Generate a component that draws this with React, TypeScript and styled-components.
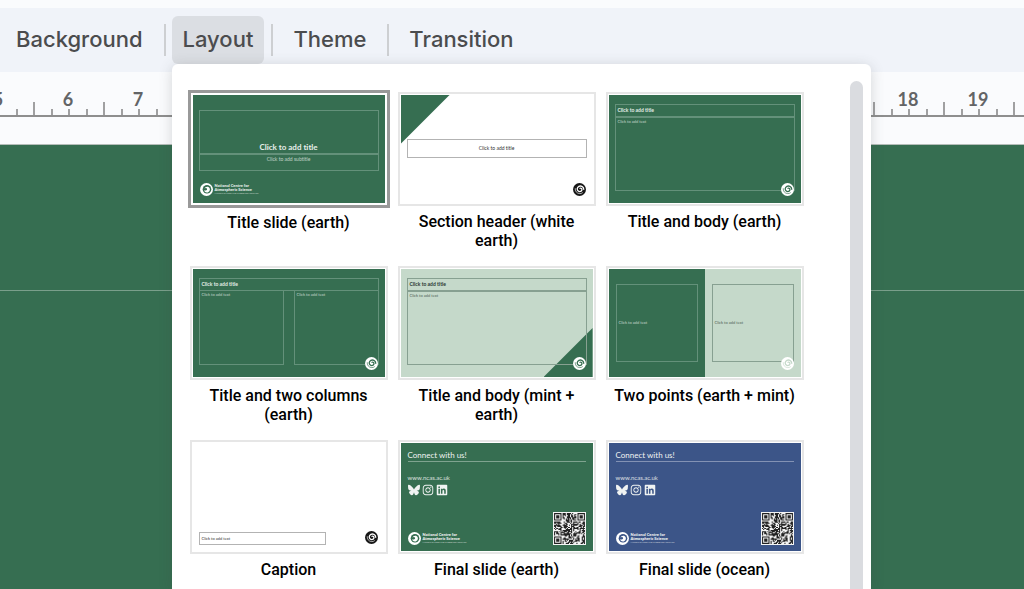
import React from "react";
import styled, { createGlobalStyle, css } from "styled-components";
import { FaBluesky, FaInstagram, FaLinkedin } from "react-icons/fa6";

const EARTH = "#366e51";
const MINT = "#c5d9ca";
const OCEAN = "#3c5588";

const GlobalStyle = createGlobalStyle`
  *, *::before, *::after { box-sizing: border-box; }
  body {
    margin: 0;
    background: #fafbfd;
    font-family: Roboto, "Liberation Sans", sans-serif;
    overflow: hidden;
  }
  button { font: inherit; color: inherit; border: 0; padding: 0; background: none; cursor: pointer; }
`;

const Page = styled.div`
  display: flex;
  flex-direction: column;
  min-height: 100vh;
  padding-top: 8px;
`;

const Toolbar = styled.nav`
  display: flex;
  align-items: center;
  height: 64px;
  padding-left: 2px;
  background: #f0f3f9;
`;

const Divider = styled.span`
  width: 2px;
  height: 32px;
  margin: 0 6px 0 7px;
  background: #cdcfd2;
`;

const ToolButton = styled.button<{ $active?: boolean }>`
  display: block;
  height: 48px;
  padding: 0 ${(p) => (p.$active ? 11 : 14)}px 2px;
  border-radius: 6px;
  font-family: Inter, Roboto, sans-serif;
  font-size: 22px;
  font-weight: 500;
  line-height: 46px;
  color: #4b4c4e;
  background: ${(p) => (p.$active ? "#dbdee3" : "transparent")};
`;

const MenuAnchor = styled.div`
  position: relative;
`;

const Menu = styled.div`
  position: absolute;
  z-index: 2;
  top: 48px;
  left: 0;
  display: flex;
  justify-content: space-between;
  width: 699px;
  height: calc(100vh - 64px);
  padding: 0 8px 0 18px;
  overflow: hidden;
  border-radius: 6px 6px 0 0;
  background: #fff;
  box-shadow: 0 2px 14px rgba(60, 64, 67, 0.2);
`;

const LayoutGrid = styled.div`
  display: grid;
  grid-template-columns: repeat(3, 198px);
  align-content: start;
  align-items: start;
  gap: 16px 10px;
  padding-top: 28px;
`;

const ScrollThumb = styled.div`
  width: 13px;
  margin-top: 17px;
  border-radius: 7px 7px 0 0;
  background: #dadce0;
`;

const LayoutOption = styled.button`
  display: flex;
  flex-direction: column;
  align-items: center;
  gap: 6px;
`;

const Frame = styled.span<{ $selected?: boolean }>`
  display: block;
  border: 2px solid #e6e6e6;
  padding: 1px;
  background: #fff;
  ${(p) =>
    p.$selected &&
    css`
      margin: -2px -2px -1px;
      border: 3px solid #999;
      padding: 2px;
    `}
`;

const OptionName = styled.span`
  font-size: 16px;
  font-weight: 500;
  line-height: 19px;
  text-align: center;
  color: #000;
`;

const Slide = styled.span<{ $bg: string; $ink: string; $line: string; $pad: string }>`
  position: relative;
  display: flex;
  flex-direction: column;
  width: 192px;
  height: 108px;
  padding: ${(p) => p.$pad};
  overflow: hidden;
  text-align: left;
  font-family: Lato, "Noto Sans", sans-serif;
  font-variant-ligatures: none;
  background: ${(p) => p.$bg};
  color: ${(p) => p.$ink};
  --line: ${(p) => p.$line};
`;

const Holder = styled.span<{
  $h: number;
  $w?: number;
  $size: number;
  $bold?: boolean;
  $center?: boolean;
  $valign?: "flex-start" | "center" | "flex-end";
}>`
  position: relative;
  display: flex;
  flex: ${(p) => (p.$w ? "none" : "1 1 auto")};
  align-items: ${(p) => p.$valign ?? "center"};
  justify-content: ${(p) => (p.$center ? "center" : "flex-start")};
  max-height: ${(p) => p.$h}px;
  min-height: ${(p) => p.$h}px;
  width: ${(p) => (p.$w ? `${p.$w}px` : "auto")};
  padding: 1px 2px;
  border: 1px solid var(--line);
  font-size: ${(p) => p.$size}px;
  font-weight: ${(p) => (p.$bold ? 700 : 400)};
  line-height: ${(p) => p.$size + 2}px;
  white-space: nowrap;
  & + &:not([data-column]) { border-top: 0; }
`;

const Soft = styled.span`
  opacity: 0.75;
`;

const Columns = styled.span`
  display: flex;
  justify-content: space-between;
  margin-top: -1px;
`;

const Half = styled.span<{ $bg: string; $ink: string; $line: string }>`
  flex: 1;
  padding: 15px 7px;
  background: ${(p) => p.$bg};
  color: ${(p) => p.$ink};
  --line: ${(p) => p.$line};
`;

const Halves = styled.span`
  display: flex;
  flex: 1;
`;

const CornerMark = styled.span`
  position: absolute;
  right: 7px;
  bottom: 7px;
  display: flex;
`;

const Corner = styled.span<{ $at: "start" | "end" }>`
  position: absolute;
  width: 49px;
  height: 49px;
  background: ${EARTH};
  ${(p) =>
    p.$at === "start"
      ? "top: 0; left: 0; clip-path: polygon(0 0, 100% 0, 0 100%);"
      : "right: 0; bottom: 0; clip-path: polygon(100% 0, 100% 100%, 0 100%);"}
`;

const Brand = styled.span`
  display: flex;
  align-items: center;
  gap: 2px;
`;

const BrandText = styled.span`
  font-size: 4px;
  font-weight: 900;
  line-height: 4px;
  white-space: nowrap;
`;

const BrandNote = styled.span`
  display: block;
  font-size: 2px;
  font-weight: 400;
  line-height: 3px;
  opacity: 0.8;
`;

const BrandRow = styled.span`
  display: flex;
  align-items: flex-end;
  justify-content: space-between;
  margin-top: auto;
  padding: 0 1px;
`;

const Heading = styled.span`
  margin: 0 1px;
  padding-bottom: 1px;
  border-bottom: 1px solid var(--line);
  font-size: 8px;
  line-height: 10px;
`;

const Site = styled.span`
  margin: 12px 1px 0;
  font-size: 6px;
  line-height: 8px;
  opacity: 0.85;
`;

const Socials = styled.span`
  display: flex;
  gap: 2px;
  margin: 2px 1px 0;
  font-size: 12px;
`;

const Ruler = styled.div`
  display: flex;
  height: 45px;
  margin-left: -37px;
  overflow: hidden;
  border-bottom: 2px solid #8e8e8e;
`;

const RulerUnit = styled.div`
  display: flex;
  flex: none;
  flex-direction: column;
  justify-content: flex-end;
  width: 70px;
  color: #636466;
  font-family: Lato, Roboto, sans-serif;
  font-size: 18px;
  font-weight: 700;
  line-height: 20px;
  text-align: center;
`;

const Ticks = styled.div`
  display: flex;
  align-items: flex-end;
  height: 13px;
  margin-top: -7px;
`;

const Tick = styled.span<{ $tall?: boolean }>`
  flex: 1;
  height: ${(p) => (p.$tall ? 13 : 6)}px;
  border-left: 2px solid #a0a0a1;
`;

const Canvas = styled.main`
  flex: 1;
  margin-top: 27px;
  border-top: 1px solid #b5bdb9;
  background: ${EARTH};
`;

const CanvasGuide = styled.div`
  height: 146px;
  border-bottom: 1px solid #7a9f8b;
`;

function Swirl({ disc, ink }: { disc: string; ink: string }) {
  return (
    <svg width="13" height="13" viewBox="0 0 26 26" aria-hidden="true">
      <circle cx="13" cy="13" r="13" fill={disc} />
      <path
        d="M14 10.5c2.4-.8 4.4 1.200 3.800 3.500-.8 3-4.600 4.200-7.300 2.200-3.200-2.400-2.600-7.600 1.300-9.500 4.600-2.200 9.400 1.300 9.700 5.800"
        fill="none"
        stroke={ink}
        strokeWidth="2.600"
        strokeLinecap="round"
      />
      <path d="M4.500 10.500c-.8 5.500 3 10.500 9 10.700 2.600 0 4.500-.8 6-2.200" fill="none" stroke={ink} strokeWidth="1.300" />
    </svg>
  );
}

function BrandSwirl({ ink }: { ink: string }) {
  return (
    <svg width="13" height="13" viewBox="0 0 26 26" aria-hidden="true">
      <circle cx="13" cy="13" r="13" fill="#fff" />
      <circle cx="14" cy="12.500" r="8.600" fill={ink} />
      <path d="M9 11.500c1-4.500 7.500-5.500 10-1.500 2.200 4-.6 9-5 9-3.500 0-5.800-2.400-5.500-5 1.500 1.800 4.500 1.600 5.500-.4.800-1.800-.6-3.600-2.400-3.400-1.200.1-2 .6-2.600 1.300z" fill="#fff" />
    </svg>
  );
}

const QR_SIZE = 29;

function isFinder(x: number, y: number): boolean | null {
  const corners = [
    [0, 0],
    [QR_SIZE - 7, 0],
    [0, QR_SIZE - 7],
  ];
  for (const [cx, cy] of corners) {
    const dx = x - cx;
    const dy = y - cy;
    if (dx >= -1 && dx <= 7 && dy >= -1 && dy <= 7) {
      const ring = Math.max(Math.abs(dx - 3), Math.abs(dy - 3));
      return ring === 3 || ring <= 1;
    }
  }
  return null;
}

function qrPath(): string {
  let seed = 29;
  let d = "";
  for (let y = 0; y < QR_SIZE; y++) {
    for (let x = 0; x < QR_SIZE; x++) {
      seed = (seed * 1103515245 + 12345) % 2147483648;
      const finder = isFinder(x, y);
      if (finder ?? seed / 2147483648 > 0.48) d += `M${x} ${y}h1v1h-1z`;
    }
  }
  return d;
}

const QR_PATH = qrPath();

function QrCode() {
  return (
    <svg width="33" height="33" viewBox="-1 -1 31 31" role="img" aria-label="QR code">
      <path fill="#f4f4f4" d="M-1-1h31v31H-1z" />
      <path fill="#222" d={QR_PATH} />
    </svg>
  );
}

function BrandLogo({ ink }: { ink: string }) {
  return (
    <Brand>
      <BrandSwirl ink={ink} />
      <BrandText>
        National Centre for
        <br />
        Atmospheric Science
        <BrandNote>NATURAL ENVIRONMENT RESEARCH COUNCIL</BrandNote>
      </BrandText>
    </Brand>
  );
}

const onDark = { $ink: "#e6eeea", $line: "#64917a" };
const onMint = { $ink: "#26352d", $line: "#87a091" };
const onWhite = { $ink: "#333", $line: "#b3b3b3" };

function TitleSlide() {
  return (
    <Slide $bg={EARTH} {...onDark} $pad="15px 6px 7px">
      <Holder $h={44} $size={8} $bold $center $valign="flex-end">Click to add title</Holder>
      <Holder $h={17} $size={5} $center $valign="flex-start"><Soft>Click to add subtitle</Soft></Holder>
      <BrandRow>
        <BrandLogo ink={EARTH} />
      </BrandRow>
    </Slide>
  );
}

function SectionSlide() {
  return (
    <Slide $bg="#fff" {...onWhite} $pad="44px 6px">
      <Corner $at="start" />
      <Holder $h={19} $size={5} $center>Click to add title</Holder>
      <CornerMark><Swirl disc="#161616" ink="#fff" /></CornerMark>
    </Slide>
  );
}

function BodySlide({ mint }: { mint?: boolean }) {
  return (
    <Slide $bg={mint ? MINT : EARTH} {...(mint ? onMint : onDark)} $pad="9px 6px">
      {mint && <Corner $at="end" />}
      <Holder $h={13} $size={5} $bold>Click to add title</Holder>
      <Holder $h={74} $size={4} $valign="flex-start"><Soft>Click to add text</Soft></Holder>
      <CornerMark><Swirl disc="#fff" ink={EARTH} /></CornerMark>
    </Slide>
  );
}

function TwoColumnSlide() {
  return (
    <Slide $bg={EARTH} {...onDark} $pad="9px 6px">
      <Holder $h={13} $size={5} $bold>Click to add title</Holder>
      <Columns>
        <Holder data-column $h={75} $w={85} $size={4} $valign="flex-start"><Soft>Click to add text</Soft></Holder>
        <Holder data-column $h={75} $w={85} $size={4} $valign="flex-start"><Soft>Click to add text</Soft></Holder>
      </Columns>
      <CornerMark><Swirl disc="#fff" ink={EARTH} /></CornerMark>
    </Slide>
  );
}

function TwoPointSlide() {
  return (
    <Slide $bg={MINT} {...onDark} $pad="0">
      <Halves>
        <Half $bg={EARTH} {...onDark}>
          <Holder $h={78} $size={4}><Soft>Click to add text</Soft></Holder>
        </Half>
        <Half $bg={MINT} {...onMint}>
          <Holder $h={78} $size={4}><Soft>Click to add text</Soft></Holder>
        </Half>
      </Halves>
      <CornerMark><Swirl disc="#fff" ink={MINT} /></CornerMark>
    </Slide>
  );
}

function CaptionSlide() {
  return (
    <Slide $bg="#fff" {...onWhite} $pad="89px 6px 6px">
      <Holder $h={13} $w={127} $size={4}>Click to add text</Holder>
      <CornerMark><Swirl disc="#161616" ink="#fff" /></CornerMark>
    </Slide>
  );
}

function FinalSlide({ bg, line }: { bg: string; line: string }) {
  return (
    <Slide $bg={bg} $ink="#f0f3f2" $line={line} $pad="7px 6px 6px">
      <Heading>Connect with us!</Heading>
      <Site>www.ncas.ac.uk</Site>
      <Socials>
        <FaBluesky />
        <FaInstagram />
        <FaLinkedin />
      </Socials>
      <BrandRow>
        <BrandLogo ink={bg} />
        <QrCode />
      </BrandRow>
    </Slide>
  );
}

const layouts: { name: string; slide: React.ReactNode; selected?: boolean }[] = [
  { name: "Title slide (earth)", slide: <TitleSlide />, selected: true },
  { name: "Section header (white earth)", slide: <SectionSlide /> },
  { name: "Title and body (earth)", slide: <BodySlide /> },
  { name: "Title and two columns (earth)", slide: <TwoColumnSlide /> },
  { name: "Title and body (mint + earth)", slide: <BodySlide mint /> },
  { name: "Two points (earth + mint)", slide: <TwoPointSlide /> },
  { name: "Caption", slide: <CaptionSlide /> },
  { name: "Final slide (earth)", slide: <FinalSlide bg={EARTH} line="#7fa38f" /> },
  { name: "Final slide (ocean)", slide: <FinalSlide bg={OCEAN} line="#8392b4" /> },
];

// The slide is 25 cm wide; the view is scrolled so that 5 cm is at the left edge.
const rulerUnits = Array.from({ length: 21 }, (_, i) => i + 5);

export default function App() {
  return (
    <Page>
      <GlobalStyle />
      <Toolbar>
        <ToolButton type="button">Background</ToolButton>
        <Divider />
        <MenuAnchor>
          <ToolButton type="button" $active aria-expanded="true">Layout</ToolButton>
          <Menu>
            <LayoutGrid>
              {layouts.map((l) => (
                <LayoutOption type="button" key={l.name} aria-pressed={!!l.selected}>
                  <Frame $selected={l.selected}>{l.slide}</Frame>
                  <OptionName>{l.name}</OptionName>
                </LayoutOption>
              ))}
            </LayoutGrid>
            <ScrollThumb />
          </Menu>
        </MenuAnchor>
        <Divider />
        <ToolButton type="button">Theme</ToolButton>
        <Divider />
        <ToolButton type="button">Transition</ToolButton>
      </Toolbar>
      <Ruler>
        {rulerUnits.map((n) => (
          <RulerUnit key={n}>
            {n}
            <Ticks>
              <Tick $tall />
              <Tick />
              <Tick />
              <Tick />
            </Ticks>
          </RulerUnit>
        ))}
      </Ruler>
      <Canvas>
        <CanvasGuide />
      </Canvas>
    </Page>
  );
}
